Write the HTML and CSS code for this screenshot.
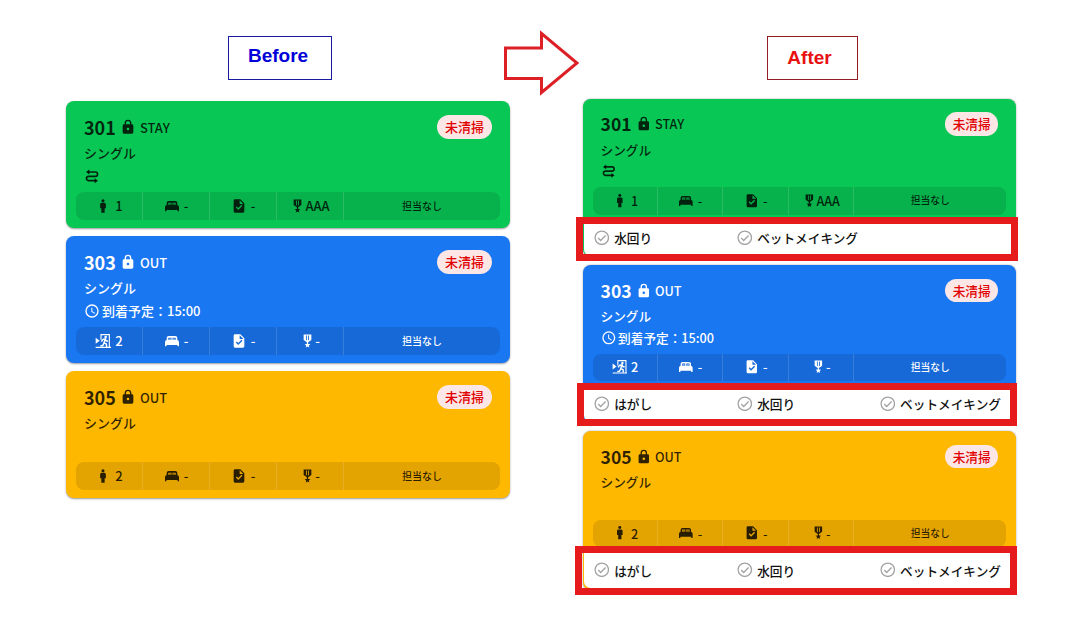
FILE: index.html
```html
<!DOCTYPE html>
<html lang="ja">
<head>
    <meta charset="UTF-8">
    <meta name="viewport" content="width=device-width, initial-scale=1.0">
    <title>Before / After</title>
    <link rel="stylesheet" href="styles.css">
</head>
<body>

    <!-- Icons -->
    <svg class="sprite">
        <symbol id="lock" viewBox="0 0 24 24">
            <path d="M12 17a2 2 0 0 0 2-2 2 2 0 0 0-4 0 2 2 0 0 0 2 2M18 8a2 2 0 0 1 2 2v10a2 2 0 0 1-2 2H6a2 2 0 0 1-2-2V10a2 2 0 0 1 2-2h1V6a5 5 0 0 1 10 0v2h1M12 3a3 3 0 0 0-3 3v2h6V6a3 3 0 0 0-3-3z"/>
        </symbol>
        <symbol id="route" viewBox="0 0 24 24">
            <path d="M6 6H17a2.900 2.900 0 0 1 0 6.500H7a2.900 2.900 0 0 0 0 6.500H18" fill="none" stroke="currentColor" stroke-width="2.500"/>
            <path d="M8 2.200v7.600L3 6zM16 15.200v7.600L21 19z"/>
        </symbol>
        <symbol id="clock" viewBox="0 0 24 24">
            <path d="M12 20a8 8 0 1 0 0-16 8 8 0 0 0 0 16m0-18a10 10 0 1 1 0 20 10 10 0 0 1 0-20m.5 5v5.250l4.200 2.600-.8 1.250L11 13V7z"/>
        </symbol>
        <symbol id="person" viewBox="0 0 24 24">
            <circle cx="12" cy="4" r="2.300"/>
            <path d="M10 7h4a2.300 2.300 0 0 1 2.300 2.300v6.200h-1.800V22h-5v-6.500H7.700V9.300A2.300 2.300 0 0 1 10 7z"/>
        </symbol>
        <symbol id="exit" viewBox="0 0 24 24">
            <path d="M9 10V2.500h12.500V21M1 21.500h23" fill="none" stroke="currentColor" stroke-width="1.700"/>
            <path d="M1 7v9l6-4.500z"/>
            <circle cx="16" cy="6" r="1.900"/>
            <path d="M9.500 13l2.500-3.500 3.500-.5-2 5.500 3.500 2 .5 4.500M13.500 15l-2 4H8M15.500 9.500l1.500 2.500h2.500" fill="none" stroke="currentColor" stroke-width="2.200"/>
        </symbol>
        <symbol id="bed" viewBox="0 0 24 24">
            <path d="M4 10.500V7.500A3 3 0 0 1 7 4.500h10a3 3 0 0 1 3 3v3a3 3 0 0 1 2.500 3V20h-2.200v-2H3.700v2H1.500v-6.500a3 3 0 0 1 2.500-3m2.200-.2h5V7H7.200a1 1 0 0 0-1 1zm6.600 0h5V8a1 1 0 0 0-1-1h-4z"/>
            <path d="M7 7.800h3.400v2.500H7zM13.600 7.800H17v2.500h-3.400z" opacity=".4"/>
        </symbol>
        <symbol id="file" viewBox="0 0 24 24">
            <path d="M14 2H6a2 2 0 0 0-2 2v16a2 2 0 0 0 2 2h12a2 2 0 0 0 2-2V8zm-3.100 16l-3.700-3.700 1.500-1.500 2.200 2.200 4.700-4.700 1.500 1.500zM13 9V3.500L18.500 9z"/>
        </symbol>
        <symbol id="medal" viewBox="0 0 14 24">
            <path d="M1 2h12v8.500l-5 3.300v1.200H6v-1.200l-5-3.300zm3.700 1.500v7l1.300.8V3.500zm3.300 0v7.800l1.300-.8v-7z"/>
            <path d="M7 13.500l1.300 3 3.200.2-2.500 2.200.8 3.200L7 20.400l-2.800 1.700.8-3.200-2.500-2.200 3.200-.2z"/>
        </symbol>
        <symbol id="check" viewBox="0 0 24 24">
            <circle cx="12" cy="12" r="10.300" fill="none" stroke="currentColor" stroke-width="2"/>
            <path d="M6.500 12.300l3.800 3.800 7.500-7.700" fill="none" stroke="currentColor" stroke-width="2"/>
        </symbol>
    </svg>

    <header class="header">
        <div class="label label-before">Before</div>
        <svg class="arrow" viewBox="0 0 76 66">
            <path d="M2.500 18H38.500V3.500L74 33 38.500 62.500V48.500H2.500z"/>
        </svg>
        <div class="label label-after">After</div>
    </header>

    <main class="board">
        <!-- Before -->
        <section class="cards before">
            <article class="card green">
                <div class="title"><b>301</b><svg><use href="#lock"/></svg><span>STAY</span><em class="badge">未清掃</em></div>
                <div class="room">シングル</div>
                <div class="note"><svg><use href="#route"/></svg></div>
                <div class="stats">
                    <div><svg><use href="#person"/></svg>1</div>
                    <div><svg><use href="#bed"/></svg>-</div>
                    <div><svg><use href="#file"/></svg>-</div>
                    <div><svg class="medal"><use href="#medal"/></svg>AAA</div>
                    <div class="staff">担当なし</div>
                </div>
            </article>
            <article class="card blue">
                <div class="title"><b>303</b><svg><use href="#lock"/></svg><span>OUT</span><em class="badge">未清掃</em></div>
                <div class="room">シングル</div>
                <div class="note"><svg><use href="#clock"/></svg>到着予定：15:00</div>
                <div class="stats">
                    <div><svg><use href="#exit"/></svg>2</div>
                    <div><svg><use href="#bed"/></svg>-</div>
                    <div><svg><use href="#file"/></svg>-</div>
                    <div><svg class="medal"><use href="#medal"/></svg>-</div>
                    <div class="staff">担当なし</div>
                </div>
            </article>
            <article class="card yellow">
                <div class="title"><b>305</b><svg><use href="#lock"/></svg><span>OUT</span><em class="badge">未清掃</em></div>
                <div class="room">シングル</div>
                <div class="note"></div>
                <div class="stats">
                    <div><svg><use href="#person"/></svg>2</div>
                    <div><svg><use href="#bed"/></svg>-</div>
                    <div><svg><use href="#file"/></svg>-</div>
                    <div><svg class="medal"><use href="#medal"/></svg>-</div>
                    <div class="staff">担当なし</div>
                </div>
            </article>
        </section>

        <!-- After -->
        <div class="after">
            <section class="cards">
                <article class="card green">
                    <div class="title"><b>301</b><svg><use href="#lock"/></svg><span>STAY</span><em class="badge">未清掃</em></div>
                    <div class="room">シングル</div>
                    <div class="note"><svg><use href="#route"/></svg></div>
                    <div class="stats">
                        <div><svg><use href="#person"/></svg>1</div>
                        <div><svg><use href="#bed"/></svg>-</div>
                        <div><svg><use href="#file"/></svg>-</div>
                        <div><svg class="medal"><use href="#medal"/></svg>AAA</div>
                        <div class="staff">担当なし</div>
                    </div>
                    <div class="tasks">
                        <div><svg><use href="#check"/></svg>水回り</div>
                        <div><svg><use href="#check"/></svg>ベットメイキング</div>
                    </div>
                </article>
                <article class="card blue">
                    <div class="title"><b>303</b><svg><use href="#lock"/></svg><span>OUT</span><em class="badge">未清掃</em></div>
                    <div class="room">シングル</div>
                    <div class="note"><svg><use href="#clock"/></svg>到着予定：15:00</div>
                    <div class="stats">
                        <div><svg><use href="#exit"/></svg>2</div>
                        <div><svg><use href="#bed"/></svg>-</div>
                        <div><svg><use href="#file"/></svg>-</div>
                        <div><svg class="medal"><use href="#medal"/></svg>-</div>
                        <div class="staff">担当なし</div>
                    </div>
                    <div class="tasks">
                        <div><svg><use href="#check"/></svg>はがし</div>
                        <div><svg><use href="#check"/></svg>水回り</div>
                        <div><svg><use href="#check"/></svg>ベットメイキング</div>
                    </div>
                </article>
                <article class="card yellow">
                    <div class="title"><b>305</b><svg><use href="#lock"/></svg><span>OUT</span><em class="badge">未清掃</em></div>
                    <div class="room">シングル</div>
                    <div class="note"></div>
                    <div class="stats">
                        <div><svg><use href="#person"/></svg>2</div>
                        <div><svg><use href="#bed"/></svg>-</div>
                        <div><svg><use href="#file"/></svg>-</div>
                        <div><svg class="medal"><use href="#medal"/></svg>-</div>
                        <div class="staff">担当なし</div>
                    </div>
                    <div class="tasks">
                        <div><svg><use href="#check"/></svg>はがし</div>
                        <div><svg><use href="#check"/></svg>水回り</div>
                        <div><svg><use href="#check"/></svg>ベットメイキング</div>
                    </div>
                </article>
            </section>
            <div class="mark mark-1"></div>
            <div class="mark mark-2"></div>
            <div class="mark mark-3"></div>
        </div>
    </main>

</body>
</html>
```

FILE: styles.css
```css
* {
    box-sizing: border-box;
    margin: 0;
    padding: 0;
}

body {
    height: 619px;
    background: #fff;
    font-family: "Noto Sans CJK JP", sans-serif;
    font-weight: 500;
    overflow: hidden;
}

svg {
    display: block;
    flex: none;
    width: 16px;
    height: 16px;
    fill: currentColor;
}

.sprite {
    position: absolute;
    width: 0;
    height: 0;
}

/* Header */
.header {
    display: flex;
    align-items: flex-start;
    height: 98px;
    padding: 30px 0 0 228px;
}

.label {
    height: 44px;
    margin-top: 6px;
    border: 1px solid;
    font: bold 19px/38px "Liberation Sans", Arial, sans-serif;
    text-align: center;
}

.label-before {
    width: 104px;
    padding-right: 4px;
    color: #0000d8;
    border-color: #1a1aa0;
}

.label-after {
    width: 91px;
    padding-right: 6px;
    line-height: 42px;
    color: #e81010;
    border-color: #8f1d22;
}

.arrow {
    width: 76px;
    height: 66px;
    margin: 0 188px 0 171px;
    fill: none;
    stroke: #dc2026;
    stroke-width: 3;
}

/* Cards */
.board {
    display: flex;
    align-items: flex-start;
    gap: 73px;
    padding-left: 66px;
}

.cards {
    display: flex;
    flex-direction: column;
    gap: 8px;
    width: 444px;
}

.before {
    margin-top: 3px;
}

.card {
    padding-top: 13px;
    border-radius: 8px;
    box-shadow: 0 1px 2px rgba(0, 0, 0, 0.4);
    color: rgba(0, 0, 0, 0.82);
    font-size: 13px;
}

.before .card {
    height: 127px;
}

.green {
    background: #08c755;
}

.blue {
    background: #1a77f2;
    color: #fff;
}

.yellow {
    background: #ffb800;
}

.title {
    display: flex;
    align-items: center;
    gap: 4px;
    height: 26px;
    padding: 0 18px;
}

.title b {
    font-size: 18px;
    font-weight: 700;
}

.badge {
    width: 55px;
    height: 24px;
    margin-left: auto;
    border-radius: 12px;
    background: #fde6e6;
    color: #e00000;
    font-style: normal;
    line-height: 24px;
    text-align: center;
}

.room {
    height: 26px;
    padding-left: 18px;
    line-height: 26px;
}

.note {
    display: flex;
    align-items: center;
    gap: 2px;
    height: 18px;
    padding-left: 18px;
}

.note svg {
    margin-top: 1px;
}

.stats {
    display: grid;
    grid-template-columns: repeat(4, 67px) 1fr;
    height: 28px;
    margin: 8px 10px 6px;
    border-radius: 8px;
    background: rgba(0, 0, 0, 0.11);
}

.stats div {
    display: flex;
    align-items: center;
    justify-content: center;
    gap: 4px;
    padding-bottom: 1px;
    border-right: 1px solid rgba(255, 255, 255, 0.14);
}

.stats .medal {
    width: 9px;
    margin: 0 -1px 0 3px;
}

.stats .staff {
    border: none;
    font-size: 10px;
}

/* After column */
.after {
    position: relative;
    width: 433px;
}

.after .cards {
    zoom: 0.9752;
    gap: 8.2px;
    padding-top: 0.6px;
}

.tasks {
    display: grid;
    grid-template-columns: repeat(3, 146.6px);
    height: 36px;
    margin: 0 1.5px 1.5px;
    padding: 2px 0 3px 9.5px;
    border-radius: 0 0 7px 7px;
    background: #fff;
    color: #111;
}

.tasks div {
    display: flex;
    align-items: center;
    gap: 5px;
    white-space: nowrap;
}

.tasks svg {
    color: #a3a3a3;
}

/* Red frames over the task rows */
.mark {
    position: absolute;
    border: 7px solid #e61c1c;
}

.mark-1 {
    top: 119px;
    left: -7px;
    width: 442px;
    height: 44px;
}

.mark-2 {
    top: 285px;
    left: -6px;
    width: 440px;
    height: 43px;
}

.mark-3 {
    top: 448px;
    left: -8px;
    width: 442px;
    height: 49px;
}
```
